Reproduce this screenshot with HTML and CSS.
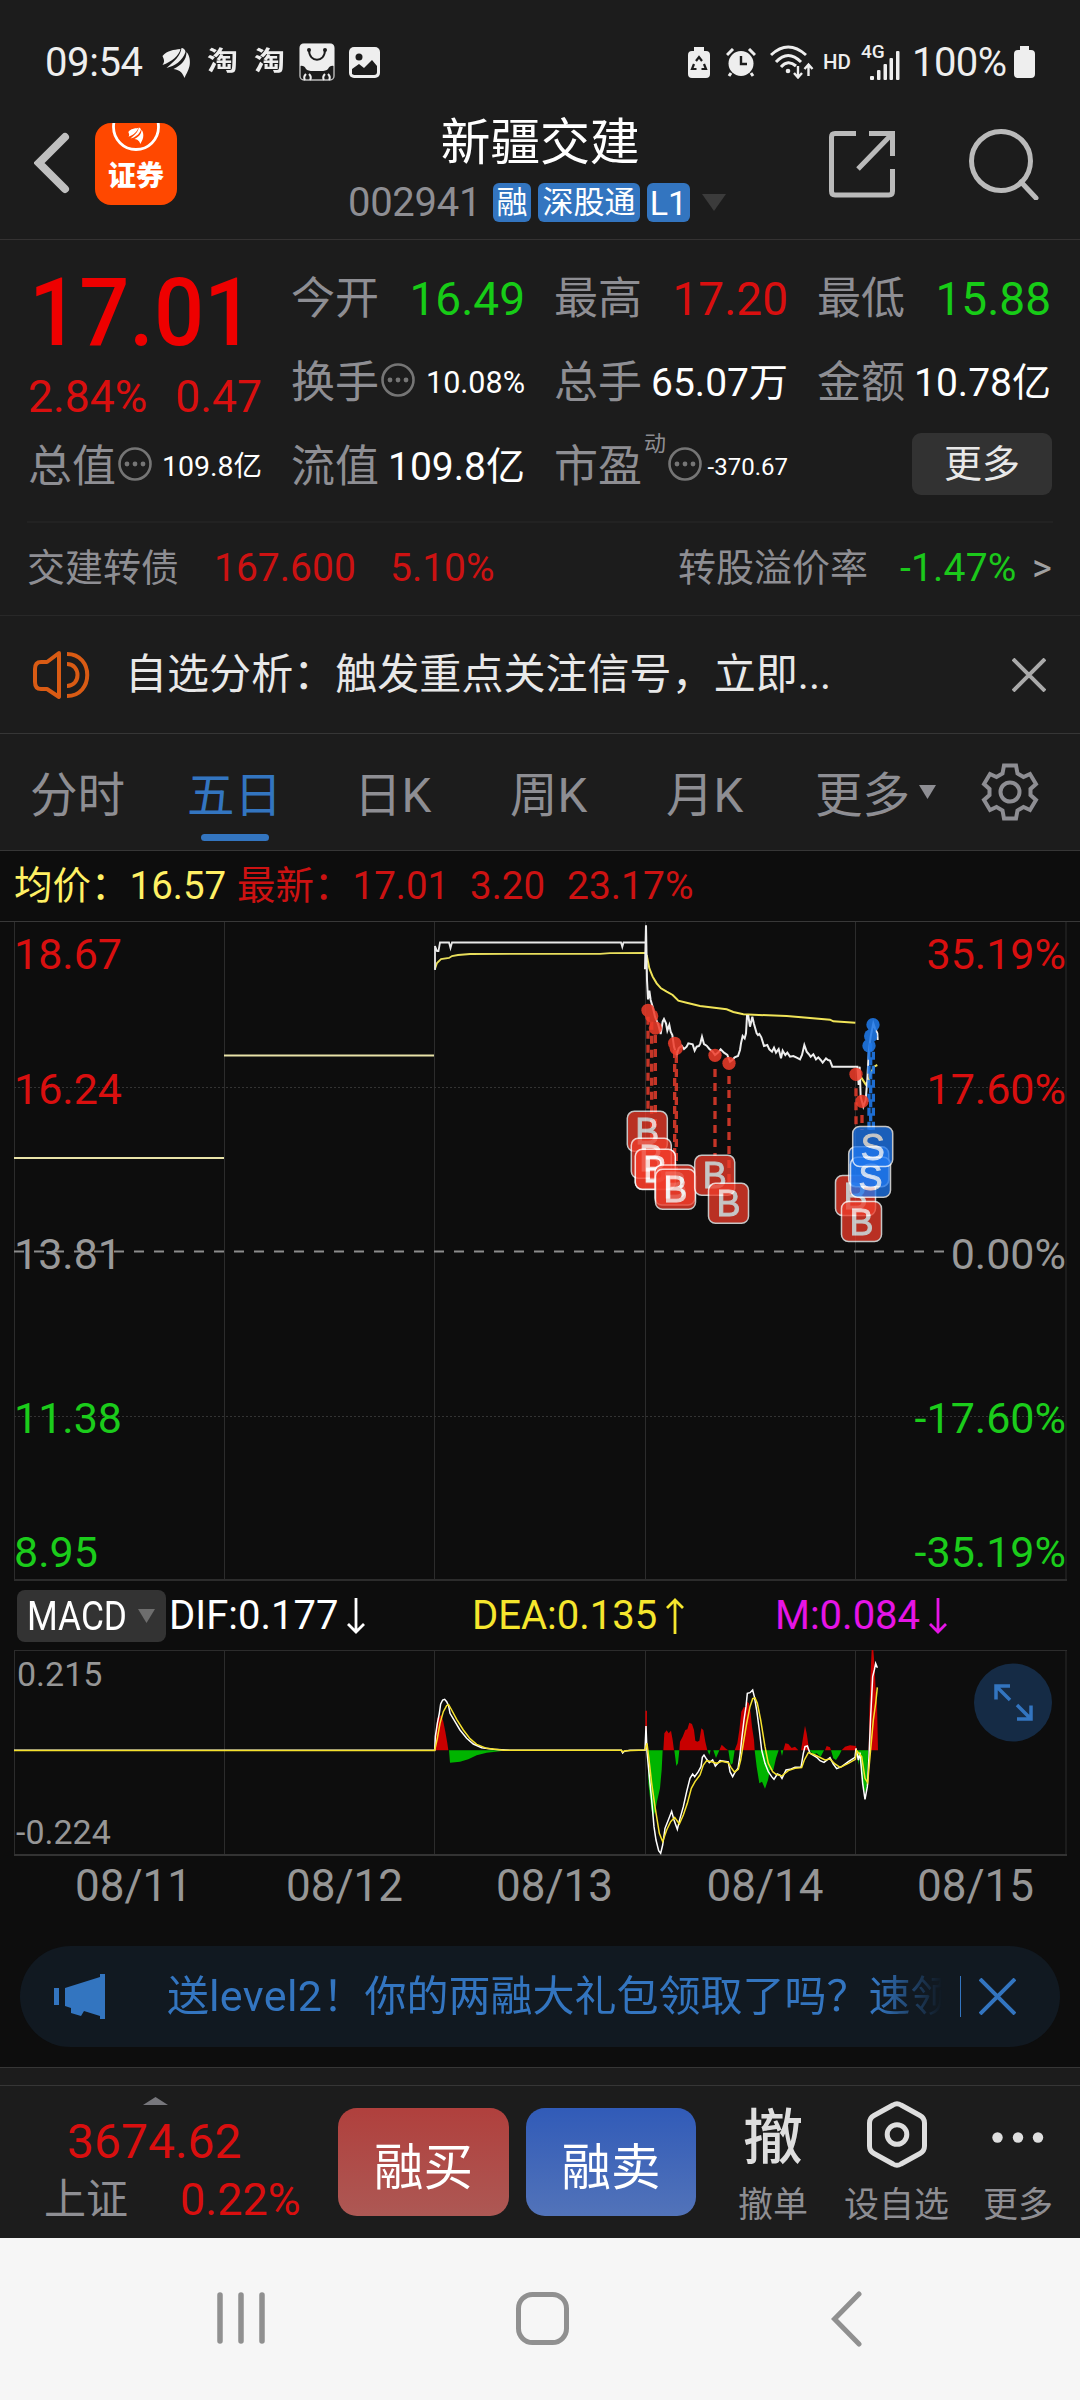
FILE: index.html
```html
<!DOCTYPE html>
<html lang="zh-CN">
<head>
<meta charset="utf-8">
<title>新疆交建 002941</title>
<link rel="stylesheet" href="styles.css">
</head>
<body>
<svg class="defs" width="0" height="0">
  <symbol id="sail" viewBox="0 0 28 31">
    <path d="M0 9C5 3 11 3 18 2C17 8 9 15 0 18C3 14 1 12 0 9Z"/>
    <path d="M19 1C21 1 23 3 23 5C20 14 12 19 4 21C12 14 18 9 19 1Z"/>
    <path d="M24 5C27 8 28 14 27 19C26 24 23 28 22 31C20 26 18 23 11 22C19 18 24 13 24 5Z"/>
  </symbol>
  <symbol id="info" viewBox="0 0 34 34">
    <circle cx="17" cy="17" r="15.5" fill="none" stroke="#757575" stroke-width="2.6"/>
    <circle cx="9" cy="17" r="2.4" fill="#757575"/><circle cx="17" cy="17" r="2.4" fill="#757575"/><circle cx="25" cy="17" r="2.4" fill="#757575"/>
  </symbol>
  <symbol id="down" viewBox="0 0 18 36"><path d="M9 0V34M1 26L9 34L17 26" fill="none" stroke="currentColor" stroke-width="2.8"/></symbol>
  <symbol id="up" viewBox="0 0 18 36"><path d="M9 36V2M1 10L9 2L17 10" fill="none" stroke="currentColor" stroke-width="2.8"/></symbol>
</svg>

<div class="status">
  <span class="clock">09:54</span>
  <svg class="st-sail" width="29" height="31" fill="#eee"><use href="#sail"/></svg>
  <span class="tao">淘</span><span class="tao tao2">淘</span>
  <svg class="st-bag" width="36" height="38" viewBox="0 0 36 38">
    <rect x="1" y="1" width="34" height="36" rx="4" fill="none" stroke="#bbb" stroke-width="1.4"/>
    <path d="M1 4Q1 1 4 1H32Q35 1 35 4V23Q31 22 29 26Q27 28 22 28H14Q9 28 7 26Q5 22 1 23Z" fill="#eee"/>
    <path d="M10 7C10 20 26 20 26 7" fill="none" stroke="#1c1c1c" stroke-width="2"/><circle cx="10" cy="7" r="2" fill="#1c1c1c"/><circle cx="26" cy="7" r="2" fill="#1c1c1c"/>
    <path d="M7 31Q4 34 6 37M10 31Q13 34 11 37M26 31Q23 34 25 37M29 31Q32 34 30 37" fill="none" stroke="#eee" stroke-width="2"/>
  </svg>
  <svg class="st-img" width="31" height="31" viewBox="0 0 31 31"><rect width="31" height="31" rx="5" fill="#eee"/><circle cx="10" cy="10" r="3.5" fill="#1c1c1c"/><path d="M3 27V22L10 17L15 21L23 13L28 19V25Q28 28 25 28H5Z" fill="#1c1c1c"/></svg>
  <svg class="st-rec" width="22" height="31" viewBox="0 0 22 31"><path d="M6 0H16V4H18Q22 4 22 8V27Q22 31 18 31H4Q0 31 0 27V8Q0 4 4 4H6Z" fill="#eee"/><path d="M8 14L11 10L14 14M16 17L18 22H13.500M8.500 22H4L6 17" fill="none" stroke="#1c1c1c" stroke-width="2.2"/></svg>
  <svg class="st-alarm" width="30" height="29" viewBox="0 0 30 29"><circle cx="15" cy="15.500" r="12.500" fill="#eee"/><path d="M1 7L7 1M23 1L29 7M5 25L3 28M25 25L27 28" stroke="#eee" stroke-width="3"/><path d="M15 8V16H21" fill="none" stroke="#1c1c1c" stroke-width="2.4"/></svg>
  <svg class="st-wifi" width="44" height="34" viewBox="0 0 44 34" fill="none" stroke="#eee" stroke-width="3"><path d="M1 10Q18 -6 36 10M6 17Q18 4 31 17M11 22Q18 14 26 21"/><circle cx="18" cy="26" r="2.300" fill="#eee" stroke="none"/><path d="M28 21V32M24 28L28 32.500L32 28M38.500 31V20M34.500 24L38.500 19.500L42.500 24" stroke-width="2.400"/></svg>
  <span class="hd">HD</span>
  <span class="g4">4G</span>
  <svg class="st-sig" width="30" height="33" viewBox="8 0 30 33"><g fill="#eee"><rect x="8" y="29" width="4" height="4" rx="1"/><rect x="15" y="23" width="3.500" height="10" rx="1"/><rect x="21.500" y="17" width="3.500" height="16" rx="1"/><rect x="27.500" y="11" width="3.500" height="22" rx="1"/><rect x="34" y="4" width="3.500" height="29" rx="1"/></g></svg>
  <span class="pct">100%</span>
  <svg class="st-bat" width="21" height="32" viewBox="0 0 21 32"><path d="M6 0H15V4H17Q21 4 21 8V28Q21 32 17 32H4Q0 32 0 28V8Q0 4 4 4H6Z" fill="#eee"/></svg>
</div>

<header class="header">
  <div class="head-left">
    <svg width="36" height="62" viewBox="0 0 36 62"><path d="M31 5L5 31L31 57" fill="none" stroke="#bfbfbf" stroke-width="8" stroke-linecap="round"/></svg>
    <div class="app">
      <svg width="82" height="30" viewBox="0 0 82 30"><circle cx="41" cy="4" r="22.500" fill="none" stroke="#fff" stroke-width="2.800"/><svg x="32" y="4" width="18" height="17" fill="#fff"><use href="#sail"/></svg></svg>
      <span>证券</span>
    </div>
  </div>
  <div class="head-mid">
    <div class="name">新疆交建</div>
    <div class="code"><span>002941</span><b>融</b><b class="b3">深股通</b><b class="l1">L1</b><i class="tri"></i></div>
  </div>
  <div class="head-right">
    <svg width="67" height="67" viewBox="0 0 67 67" fill="none" stroke="#bababa" stroke-width="5"><path d="M27 2.500H6Q2.500 2.500 2.500 6V60Q2.500 64 6 64H60Q63.500 64 63.500 60V38M40 2.500H63.500V25M63.500 2.500L29 38" /></svg>
    <svg class="find" width="72" height="72" viewBox="0 0 72 72" fill="none" stroke="#bababa" stroke-width="5"><circle cx="33" cy="33" r="29.500"/><path d="M53 54L68 70" stroke-linecap="round"/></svg>
  </div>
</header>

<section class="quote">
  <div class="price"><div class="last">17.01</div><div class="chg"><span>2.84%</span><span>0.47</span></div></div>
  <div class="cell"><label>今开</label><span class="v1 g">16.49</span></div>
  <div class="cell"><label>最高</label><span class="v1 r">17.20</span></div>
  <div class="cell"><label>最低</label><span class="v1 g">15.88</span></div>
  <div class="cell"><label>换手</label><svg class="info" width="34" height="34"><use href="#info"/></svg><span class="v3">10.08%</span></div>
  <div class="cell"><label>总手</label><span class="v2">65.07万</span></div>
  <div class="cell"><label>金额</label><span class="v2">10.78亿</span></div>
  <div class="cell"><label>总值</label><svg class="info" width="34" height="34"><use href="#info"/></svg><span class="v4">109.8亿</span></div>
  <div class="cell"><label>流值</label><span class="v2">109.8亿</span></div>
  <div class="cell"><label>市盈</label><sup>动</sup><svg class="info" width="34" height="34"><use href="#info"/></svg><span class="v5">-370.67</span></div>
  <div class="cell"><button class="more">更多</button></div>
</section>

<section class="bond"><span class="bn">交建转债</span><span class="bp">167.600</span><span class="bc">5.10%</span><span class="bl">转股溢价率</span><span class="bv">-1.47%</span><span class="gt">&gt;</span></section>

<section class="notice">
  <svg width="58" height="50" viewBox="0 0 58 50" fill="none" stroke="#d95b14" stroke-width="4"><path d="M26 3L14 12H8Q2 12 2 19V32Q2 39 8 39H14L26 47Z" stroke-linejoin="round"/><path d="M34 4C61 4 61 46 34 46M34 14C48 14 48 36 34 36"/></svg>
  <span>自选分析：触发重点关注信号，立即...</span>
  <svg class="x" width="34" height="34" viewBox="0 0 34 34"><path d="M1 1L33 33M33 1L1 33" stroke="#aaa" stroke-width="4"/></svg>
</section>

<nav class="tabs">
  <span>分时</span><span class="on">五日</span><span>日K</span><span>周K</span><span>月K</span><span class="tm">更多</span>
  <svg class="tt" width="17" height="14"><path d="M0 0H17L8.500 14Z" fill="#8e8e93"/></svg>
  <svg class="gear" width="58" height="58" viewBox="0 0 58 58" fill="none" stroke="#8e8e93" stroke-width="4"><path d="M23 2.500H35L36.500 10.500L42.500 14L49 11L55 21L49.500 26V32L55 37L49 47L42.500 44L36.500 47.500L35 55.500H23L21.500 47.500L15.500 44L9 47L3 37L8.500 32V26L3 21L9 11L15.500 14L21.500 10.500Z"/><circle cx="29" cy="29" r="9.500"/></svg>
</nav>

<section class="legend"><span class="avg">均价：16.57</span><span class="new">最新：17.01</span><span class="d">3.20</span><span class="p">23.17%</span></section>

<svg class="chart" width="1080" height="660" viewBox="0 921 1080 660">
  <g class="grid">
    <path d="M0 921.5H1080" stroke="#383838"/>
    <path d="M14.500 922V1580M224.500 922V1580M434.500 922V1580M645.500 922V1580M855.500 922V1580M1066 922V1580"/>
    <path d="M14 1580H1067" stroke-width="2"/>
    <path d="M14 1087.500H1066M14 1416.500H1066" stroke="#333" stroke-dasharray="2 2"/>
    <path d="M14 1251.500H946" stroke="#8c8c8c" stroke-width="2" stroke-dasharray="10 10"/>
  </g>
  <g class="axis">
    <g fill="#d90f0f"><text x="14" y="968.500">18.67</text><text x="14" y="1104">16.24</text></g>
    <text x="14" y="1269" fill="#999">13.81</text>
    <g fill="#1bcc1b"><text x="14" y="1432.500">11.38</text><text x="14" y="1567">8.95</text></g>
    <g text-anchor="end"><g fill="#d90f0f"><text x="1066" y="968.500">35.19%</text><text x="1066" y="1104">17.60%</text></g>
    <text x="1066" y="1269" fill="#999">0.00%</text>
    <g fill="#1bcc1b"><text x="1066" y="1432.500">-17.60%</text><text x="1066" y="1567">-35.19%</text></g></g>
  </g>
  <path d="M14 1158H224M224 1055.500H434" stroke="#e8e2a8" stroke-width="2.200"/>
  <g fill="none" stroke-width="1.800">
    <path d="M435 969L437 963L441 959L449 958L452 956L458 955L470 954L600 953.800L610 953.200L645 953" stroke="#e8de5c"/>
    <path d="M435 970V946L437 951H438.500L440 942.500H449L450.500 948L452 942.500H621L622.300 947L623.500 942.500H645" stroke="#e8e8e8"/>
  </g>
  <g transform="translate(600 900) scale(.33333)" fill="none">
    <g stroke-width="6">
      <path d="M140 165L148 205L158 230L170 250L183 265L200 275L218 285L235 302L260 308L300 318L380 328L400 336L430 343L560 348L690 359L700 364L766 368M775 515L782 530L797 553L805 545L812 520L822 500L832 495" stroke="#f0e458"/>
      <path d="M135 208L138 76L141 240L144 298L148 272L152 300L158 320L165 350L175 375L182 402L188 365L192 357L198 370L202 392L208 375L212 395L217 405L222 440L230 465L236 445L245 437L252 447L260 440L265 430L278 433L284 452L290 440L297 438L301 430L306 410L312 432L320 437L328 447L338 455L345 465L355 457L362 448L372 458L382 465L390 485L397 480L404 472L414 468L420 450L423 430L428 408L434 415L438 400L441 348L445 348L450 380L457 350L462 372L470 400L474 405L478 402L484 412L492 438L502 435L508 448L516 455L522 443L528 458L536 447L543 475L548 452L556 465L562 458L570 470L580 468L590 473L600 478L606 465L613 435L620 455L626 462L632 470L640 463L648 478L655 472L662 480L668 488L678 475L684 480L690 482L697 500H772L776 555L779 500L782 590L790 620L797 600L802 540L805 480L808 440L812 410L820 370L825 385L832 400L833 420" stroke="#eee"/>
    </g>
    <g stroke="#d93a2a" stroke-width="10" stroke-dasharray="24 18" opacity=".9">
      <path d="M144 350V640M155 365V720M166 405V755M224 450V800M229 465V812M345 507V768M387 528V855M768 565V690M786 645V690"/>
      <path d="M807 455V690M812 430V690M820 455V690" stroke="#1f78e8"/>
    </g>
    <g fill="#f03c2a" opacity=".85"><circle cx="144" cy="331" r="20"/><circle cx="155" cy="348" r="20"/><circle cx="166" cy="384" r="20"/><circle cx="224" cy="430" r="20"/><circle cx="229" cy="445" r="20"/><circle cx="345" cy="466" r="20"/><circle cx="387" cy="490" r="20"/><circle cx="768" cy="523" r="20"/><circle cx="786" cy="604" r="20"/></g>
    <g fill="#1f78e8" opacity=".88"><circle cx="819" cy="374" r="20"/><circle cx="812" cy="408" r="20"/><circle cx="807" cy="437" r="20"/></g>
  </g>
  <g class="marks">
    <g transform="translate(627.300 1111.300)"><rect width="40" height="40" rx="7"/><text x="20" y="33">B</text></g>
    <g transform="translate(635.300 1149.500)"><rect width="40" height="40" rx="7"/><text x="20" y="33">B</text></g>
    <g transform="translate(631.300 1138.300)"><rect width="40" height="40" rx="7"/><text x="20" y="33">B</text></g>
    <g transform="translate(635.300 1149.300)"><rect width="40" height="40" rx="7"/><text x="20" y="33">B</text></g>
    <g transform="translate(655 1165)"><rect width="40" height="40" rx="7"/><text x="20" y="33">B</text></g>
    <g transform="translate(655.500 1169.300)"><rect width="40" height="40" rx="7"/><text x="20" y="33">B</text></g>
    <g transform="translate(694.700 1155.300)"><rect width="40" height="40" rx="7"/><text x="20" y="33">B</text></g>
    <g transform="translate(708.500 1183.300)"><rect width="40" height="40" rx="7"/><text x="20" y="33">B</text></g>
    <g transform="translate(835.500 1175.500)"><rect width="40" height="40" rx="7"/><text x="20" y="33">B</text></g>
    <g transform="translate(841.500 1201.500)"><rect width="40" height="40" rx="7"/><text x="20" y="33">B</text></g>
    <g class="s" transform="translate(848.700 1146.700)"><rect width="40" height="40" rx="7"/></g>
    <g class="s" transform="translate(850.500 1157.300)"><rect width="40" height="40" rx="7"/><text x="20" y="33">S</text></g>
    <g class="s" transform="translate(852.700 1126.500)"><rect width="40" height="40" rx="7"/><text x="20" y="33">S</text></g>
  </g>
</svg>

<section class="macd-head">
  <div class="pick"><span>MACD</span><svg width="17" height="14"><path d="M0 0H17L8.500 14Z" fill="#6e6e6e"/></svg></div>
  <div class="ind dif">DIF:0.177<svg width="18" height="36"><use href="#down"/></svg></div>
  <div class="ind dea">DEA:0.135<svg width="18" height="36"><use href="#up"/></svg></div>
  <div class="ind m">M:0.084<svg width="18" height="36"><use href="#down"/></svg></div>
</section>

<svg class="macd" width="1080" height="276" viewBox="0 1650 1080 276">
  <g class="grid">
    <path d="M14 1650.500H1067M14.500 1650V1855M224.500 1650V1855M434.500 1650V1855M645.500 1650V1855M855.500 1650V1855M1066 1650V1855"/>
    <path d="M14 1855H1067" stroke-width="2" stroke="#333"/>
  </g>
  <g class="scale"><text x="17" y="1685.500">0.215</text><text x="16" y="1844">-0.224</text></g>
  <g transform="translate(400 1570) scale(.33333)">
    <path fill="#c80000" d="M105 541V530L108 480L112 445L118 440L124 435L130 455L136 485L142 520L145 541ZM736 541V422H741V541ZM790 541L793 490L800 481L806 490L813 482L818 510L822 541ZM838 541L840 515L848 500L856 480L862 478L868 458L876 462L882 480L886 512L892 515L898 512L904 475L910 480L916 515L922 541ZM958 541L965 524L978 536L985 541ZM1004 541L1012 520L1018 480L1024 425L1032 410L1038 415L1041 395L1047 400L1052 430L1056 470L1062 510L1064 541ZM1150 541L1156 520L1165 522L1175 534L1185 530L1195 541ZM1203 541L1208 510L1215 467L1220 490L1226 530L1228 541ZM1275 541L1280 528L1290 532L1293 541ZM1325 541L1335 530L1350 526L1368 528L1370 541ZM1406 541L1408 430L1411 330L1415 240H1420L1424 290L1427 360L1431 400L1434 541Z"/>
    <path fill="#00b400" d="M147 541L150 578L180 575L205 568L230 556L260 548L305 543V541ZM743 541L745 640L752 700L758 742L765 725L772 690L780 655L785 600L788 541ZM823 541L829 588L834 580L838 541ZM922 541L928 555L932 541ZM940 541L948 564L958 541ZM985 541L992 585L998 580L1004 541ZM1064 541L1070 590L1078 640L1086 635L1095 656L1104 630L1110 600H1120L1128 565L1136 541ZM1142 541L1146 558L1150 541ZM1228 541L1240 553L1250 550L1262 560L1272 541ZM1293 541L1300 565L1308 570L1318 555L1325 541ZM1372 541L1375 585L1380 560L1388 640L1395 670L1400 650L1405 541Z"/>
    <g fill="none" stroke-width="4.500">
      <path stroke="#fff" d="M-1158 541H104L106 500L112 460L118 430L122 402L128 390L134 388L140 395L146 408L150 430L165 455L180 480L200 505L220 522L245 533L280 538L330 541H664L668 549L673 544L690 541H735L738 468L741 545L748 620L755 690L762 770L768 810L776 842L782 850L788 825L795 775L805 750L815 724L822 750L832 778L840 745L850 710L860 665L870 625L878 612L884 620L895 605L903 590L907 562L912 555L920 568L928 578L938 570L946 588L960 572L985 576L990 605L998 620L1006 605L1014 595L1020 555L1026 500L1032 450L1038 410L1042 370L1050 368L1058 360L1063 380L1070 420L1078 480L1085 540L1095 580L1105 605L1115 620L1122 628L1132 612L1140 615L1146 625L1158 600L1170 598L1185 592H1203L1210 550L1215 530L1222 528L1230 550L1250 562L1260 572L1272 577L1290 563L1300 582L1310 596L1325 590L1345 575L1365 562L1368 535L1375 570L1380 548L1388 640L1395 688L1402 650L1407 560L1412 440L1418 320L1423 300L1427 280L1432 293"/>
      <path stroke="#f5e12d" d="M-1158 541.500H104L112 505L120 460L130 425L140 407L146 404L155 420L170 448L190 480L210 506L230 523L260 535L310 541H664L668 546L675 542L735 540L741 520L746 560L755 640L765 710L778 790L788 815L800 780L812 755L824 742L838 762L850 735L862 700L874 655L885 635L900 615L910 585L920 572L935 575L950 580L965 574L985 578L993 592L1003 606L1015 598L1022 570L1030 520L1040 460L1050 410L1058 386L1065 384L1072 400L1082 450L1095 530L1105 580L1118 605L1128 613L1145 618L1165 602L1185 595L1205 593L1213 570L1225 548L1245 555L1275 570L1290 567L1305 582L1320 592L1345 580L1366 568L1370 542L1385 560L1395 625L1403 638L1410 560L1420 450L1427 400L1432 352"/>
    </g>
  </g>
  <circle cx="1013" cy="1702.500" r="39" fill="#152b45"/>
  <path d="M996 1699.500V1686H1010M997 1687L1010 1700M1031 1705.500V1719H1017M1030 1718L1017 1705" fill="none" stroke="#3375c0" stroke-width="3.500"/>
  <g class="dates"><text x="133.500" y="1900.500">08/11</text><text x="344.500" y="1900.500">08/12</text><text x="554.500" y="1900.500">08/13</text><text x="765" y="1900.500">08/14</text><text x="975.500" y="1900.500">08/15</text></g>
</svg>

<div class="promo-wrap"><div class="promo">
  <svg width="52" height="46" viewBox="0 0 52 46" fill="#3375c0"><rect x="0" y="14" width="5" height="17"/><path d="M11 14L46 3V0H51V45H46V42L30 37L27 42L17 39V34L11 32Z"/></svg>
  <span class="msg">送<span class="lv">level2</span>！你的两融大礼包领取了吗？速领</span>
  <i class="bar"></i>
  <svg class="px" width="37" height="37" viewBox="0 0 37 37"><path d="M1 1L36 36M36 1L1 36" stroke="#3375c0" stroke-width="4"/></svg>
</div></div>

<div class="strip"></div>
<footer class="bottom">
  <div class="index">
    <svg width="25" height="8"><path d="M0 8L12.500 0L25 8Z" fill="#77777c"/></svg>
    <div class="iv">3674.62</div>
    <div class="ir"><span>上证</span><b>0.22%</b></div>
  </div>
  <button class="btn buy">融买</button><button class="btn sell">融卖</button>
  <div class="act a1"><div class="ic che">撤</div><span>撤单</span></div>
  <div class="act a2"><div class="ic"><svg width="60" height="67" viewBox="0 0 60 67" fill="none" stroke="#dedede" stroke-width="5"><path d="M26 4Q30 1.500 34 4L53 14.500Q57.500 17 57.500 22V45Q57.500 50 53 52.500L34 63Q30 65.500 26 63L7 52.500Q2.500 50 2.500 45V22Q2.500 17 7 14.500Z"/><circle cx="30" cy="33.500" r="9.800"/></svg></div><span>设自选</span></div>
  <div class="act a3"><div class="ic"><svg width="52" height="67"><g fill="#dedede"><circle cx="5.500" cy="36.500" r="5.200"/><circle cx="26" cy="36.500" r="5.200"/><circle cx="46" cy="36.500" r="5.200"/></g></svg></div><span>更多</span></div>
</footer>

<div class="sysnav">
  <svg width="48" height="52" viewBox="0 0 48 52"><path d="M3 3V49M24 3V49M45 3V49" stroke="#909090" stroke-width="5.500" stroke-linecap="round"/></svg>
  <svg class="home" width="53" height="53" viewBox="0 0 53 53"><rect x="2.500" y="2.500" width="48" height="48" rx="14" fill="none" stroke="#909090" stroke-width="5"/></svg>
  <svg class="back" width="31" height="56" viewBox="0 0 31 56"><path d="M28 3L3.500 28L28 53" fill="none" stroke="#909090" stroke-width="5" stroke-linecap="round"/></svg>
</div>
</body>
</html>
```
FILE: styles.css
```css
* { box-sizing: border-box; }
body { margin: 0; width: 1080px; height: 2400px; overflow: hidden; background: #0d0d0d; color: #fff; font-family: Roboto, "Noto Sans CJK SC", sans-serif; }
svg { display: block; flex: none; }
.defs { position: absolute; }
span, div, b, label, button { white-space: nowrap; }

.status { height: 108px; padding: 16px 0 0 45px; display: flex; align-items: center; background: #1c1c1c; color: #eee; font-size: 40px; line-height: 46px; }
.clock { width: 98px; letter-spacing: -.4px; padding-top: 2px; }
.st-sail { margin-left: 19px; }
.tao { margin-left: 16px; width: 31px; font-size: 31px; font-weight: 700; transform: scaleY(.85); }
.st-bag { margin-left: 14px; }
.st-img { margin-left: 14px; }
.st-rec { margin-left: auto; }
.st-alarm { margin-left: 16px; }
.st-wifi { margin-left: 14px; }
.hd { margin-left: 9px; font-size: 20.500px; font-weight: 500; width: 29px; }
.g4 { margin-left: 9px; width: 9px; font-size: 19px; font-weight: 500; line-height: 24px; margin-top: -20px; }
.st-sig { margin-top: 2px; }
.pct { margin-left: 12px; width: 97px; letter-spacing: -.6px; padding-top: 2px; }
.st-bat { margin: 0 45px 0 5px; }

.header { height: 132px; display: grid; grid-template-columns: 347px 380px 353px; background: #1c1c1c; border-bottom: 1px solid #343232; }
.head-left { display: flex; padding: 15px 0 0 34px; }
.head-left > svg { margin-top: 9px; }
.app { margin-left: 25px; width: 82px; height: 82px; border-radius: 16px; overflow: hidden; background: #ff4800; }
.app span { display: block; text-align: center; font-size: 28px; line-height: 36px; font-weight: 900; margin-top: 6px; }
.head-mid { padding-top: 5px; }
.name { font-size: 50px; line-height: 60px; text-align: center; padding-left: 6px; letter-spacing: -.3px; }
.code { margin-top: 9px; height: 40px; display: flex; align-items: center; font-size: 40px; line-height: 40px; color: #8e8e93; }
.code span { width: 145px; margin-left: 1px; padding-top: 1px; letter-spacing: -.3px; }
.code b { font-weight: 400; width: 38px; height: 39px; line-height: 40px; margin-right: 7px; border-radius: 6px; background: #3375c0; color: #fff; font-size: 31px; text-align: center; }
.code .b3 { width: 102px; }
.code .l1 { width: 43px; font-size: 34px; margin-right: 12px; }
.tri { border: 12.5px solid transparent; border-top: 17px solid #3b3b3b; border-bottom: 0; }
.head-right { display: flex; padding: 23px 0 0 102px; }
.find { margin: -3px 0 0 72px; }

.quote { height: 281px; padding: 17px 0 0 28px; background: #1c1c1c; display: grid; grid-template-columns: repeat(4, 234px); grid-auto-rows: 84px; column-gap: 29px; }
.price { grid-row: span 2; color: #d90f0f; }
.last { height: 112px; line-height: 112px; font-size: 95px; font-weight: 500; color: #ee0000; transform: scaleX(.93); transform-origin: 0 0; padding-left: 1px; }
.chg { display: flex; justify-content: space-between; font-size: 44.500px; line-height: 56px; }
.cell { display: flex; align-items: center; line-height: 60px; padding-right: 1px; }
.cell:nth-child(n+2) { padding-right: 0; }
.cell label { font-size: 44px; color: #8e8e93; }
.cell span { margin-left: auto; }
.cell .info { margin: -7px 0 0 2px; }
.v1 { font-size: 46px; } .v2 { font-size: 39px; } .v3 { font-size: 30.500px; } .v4 { font-size: 28.500px; } .v5 { font-size: 24px; }
.r { color: #d90f0f; } .g { color: #17cc17; }
.cell sup { font-size: 22px; line-height: 22px; color: #8e8e93; margin: -46px 0 0 2px; }
.more { margin-left: 95px; margin-top: -6px; width: 140px; flex: none; height: 62px; border: 0; border-radius: 9px; background: #323232; color: #e8e8e8; font: 38px/62px Roboto, "Noto Sans CJK SC", sans-serif; padding: 0; }

.bond { position: relative; height: 95px; background: #1c1c1c; border-bottom: 1px solid #282828; padding-left: 27px; display: flex; align-items: center; font-size: 39px; line-height: 50px; color: #8e8e93; }
.bond::before { content: ""; position: absolute; left: 27px; right: 27px; top: 0; height: 2px; background: #222; }
.bn { font-size: 38px; width: 187px; }
.bp { width: 176px; color: #cc1212; } .bc { width: 288px; color: #cc1212; }
.bl { font-size: 38px; width: 222px; } .bv { color: #1bc81b; width: 132px; letter-spacing: .2px; } .gt { font-size: 38px; color: #a0a0a0; }

.notice { height: 118px; background: #1c1c1c; border-bottom: 1px solid #363636; padding-left: 33px; display: flex; align-items: center; font-size: 42px; line-height: 58px; color: #e8e8e8; }
.notice span { margin-left: 34px; width: 887px; letter-spacing: .05px; }

.tabs { height: 117px; background: #1c1c1c; border-bottom: 1px solid #363636; display: grid; grid-template-columns: 157px 167px 156px 156px 149px 104px 62px 1fr; padding-left: 30px; align-items: center; font-size: 47.500px; line-height: 114px; color: #8e8e93; }
.tabs span { padding-top: 5px; height: 116px; }
.tabs .on { color: #3375c0; position: relative; }
.tabs .on::after { content: ""; position: absolute; left: 14px; bottom: 9px; width: 68px; height: 7px; border-radius: 4px; background: #3375c0; }

.legend { height: 70px; display: flex; align-items: center; padding-left: 14px; font-size: 38.500px; line-height: 70px; color: #cc1212; }
.avg { color: #fff064; width: 223px; } .new { width: 233px; } .d { width: 97px; } .p { font-size: 39px; }

.grid { fill: none; stroke: #2c2c2c; }
.axis { font-size: 43px; }
.marks g { opacity: .76; }
.marks rect { fill: #f03c2a; stroke: #fff; stroke-width: 1.5; }
.marks .s rect { fill: #1f78f0; }
.marks text { font: 36px "Liberation Sans", sans-serif; fill: #fff; stroke: #fff; stroke-width: .9; text-anchor: middle; }

.macd-head { height: 69px; display: flex; align-items: center; padding-left: 17px; font-size: 40px; line-height: 52px; }
.pick { width: 149px; height: 52px; border-radius: 8px; background: #333; display: flex; align-items: center; padding-left: 10px; }
.pick span { font-size: 41px; width: 110px; transform: scaleX(.86); transform-origin: 0 0; }
.pick svg { margin-left: 1px; }
.ind { display: flex; align-items: center; gap: 9px; margin-left: 3px; }
.dif { width: 300px; } .dea { width: 300px; color: #f5e62d; } .m { color: #e614e6; }
.scale { font-size: 34px; fill: #969696; }
.dates { font-size: 44px; fill: #969696; text-anchor: middle; }

.promo-wrap { padding: 20px 20px 0; height: 141px; }
.promo { height: 101px; border-radius: 51px; background: #111921; display: flex; align-items: center; padding-left: 34px; color: #3375c0; font-size: 42px; line-height: 60px; }
.msg { margin-left: 61px; width: 779px; overflow: hidden; -webkit-mask-image: linear-gradient(90deg, #000 91%, transparent 99.500%); mask-image: linear-gradient(90deg, #000 91%, transparent 99.500%); }
.lv { font-size: 43px; letter-spacing: .4px; }
.bar { width: 1px; height: 41px; background: #3375c0; margin: 0 18px 0 14px; }

.strip { height: 18px; background: #1c1c1c; border-top: 1px solid #363636; }
.bottom { height: 153px; background: #1c1c1c; border-top: 1px solid #363636; display: flex; }
.index { width: 338px; padding-top: 11px; color: #d90f0f; }
.index > svg { margin-left: 143px; }
.iv { font-size: 48px; line-height: 60px; padding-left: 67px; margin-top: 7px; }
.ir { display: flex; padding-left: 44px; font-size: 45px; line-height: 56px; }
.ir span { font-size: 42px; color: #8e8e93; width: 136px; } .ir b { font-weight: 400; }
.btn { margin: 22px 17px 0 0; width: 171px; height: 108px; border: 0; border-radius: 19px; color: #fff; padding: 12px 0 0; font: 49.500px/96px Roboto, "Noto Sans CJK SC", sans-serif; }
.btn.sell { width: 170px; }
.buy { background: linear-gradient(#b0403d, #ad5854); }
.sell { background: linear-gradient(#315bb8, #5273b9); }
.act { padding-top: 15px; display: flex; flex-direction: column; align-items: center; font-size: 35px; line-height: 50px; color: #8e8e93; }
.ic { height: 67px; margin-bottom: 13px; }
.che { font-size: 60px; line-height: 76px; color: #dedede; font-weight: 500; }
.a1 { margin-left: 24px; width: 72px; } .a2 { margin-left: 34px; width: 107px; } .a3 { margin-left: 32px; width: 72px; }

.sysnav { height: 162px; background: #f6f6f6; display: flex; padding: 54px 0 0 217px; }
.home { margin-left: 251px; } .back { margin: -1px 0 0 262px; }
```
